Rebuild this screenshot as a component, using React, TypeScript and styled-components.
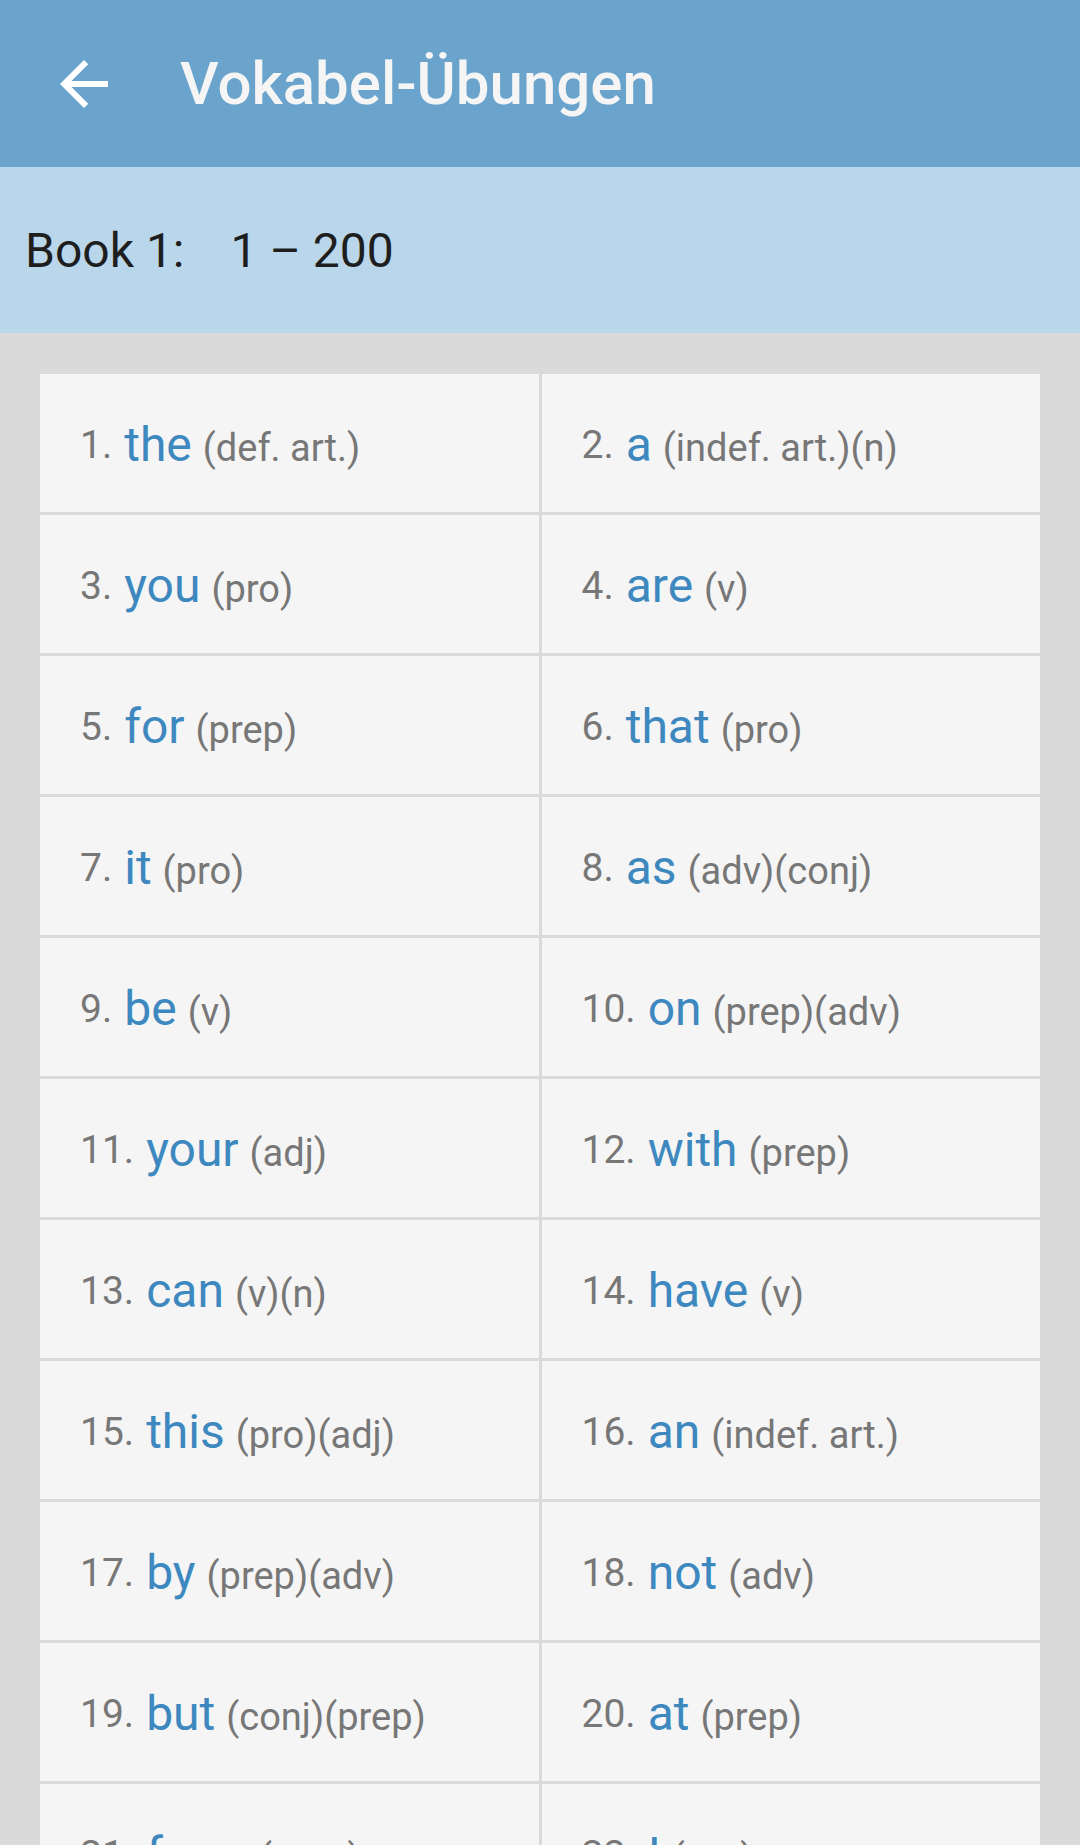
import React from 'react';
import styled, { createGlobalStyle } from 'styled-components';

interface Word {
  word: string
  pos: string
}

const words: Word[] = [
  { word: 'the', pos: '(def. art.)' },
  { word: 'a', pos: '(indef. art.)(n)' },
  { word: 'you', pos: '(pro)' },
  { word: 'are', pos: '(v)' },
  { word: 'for', pos: '(prep)' },
  { word: 'that', pos: '(pro)' },
  { word: 'it', pos: '(pro)' },
  { word: 'as', pos: '(adv)(conj)' },
  { word: 'be', pos: '(v)' },
  { word: 'on', pos: '(prep)(adv)' },
  { word: 'your', pos: '(adj)' },
  { word: 'with', pos: '(prep)' },
  { word: 'can', pos: '(v)(n)' },
  { word: 'have', pos: '(v)' },
  { word: 'this', pos: '(pro)(adj)' },
  { word: 'an', pos: '(indef. art.)' },
  { word: 'by', pos: '(prep)(adv)' },
  { word: 'not', pos: '(adv)' },
  { word: 'but', pos: '(conj)(prep)' },
  { word: 'at', pos: '(prep)' },
  { word: 'from', pos: '(prep)' },
  { word: 'I', pos: '(pro)' },
]

const GlobalStyle = createGlobalStyle`
  html, body {
    margin: 0;
    padding: 0;
    background: #dadada;
    font-family: Roboto, "Noto Sans", "Liberation Sans", sans-serif;
  }
`

const BackIcon = () => (
  <svg width="72" height="72" viewBox="0 0 24 24" fill="#ffffff">
    <path d="M20 11H7.83l5.59-5.59L12 4l-8 8 8 8 1.41-1.41L7.83 13H20v-2z" />
  </svg>
)

const App = () => {
  return (
    <Page>
      <GlobalStyle />
      <Toolbar>
        <NavButton aria-label="back">
          <BackIcon />
        </NavButton>
        <Title>Vokabel-Übungen</Title>
      </Toolbar>
      <SubHeader>
        <span>Book 1:</span>
        <span>1 – 200</span>
      </SubHeader>
      <WordGrid>
        {words.map((w, i) => (
          <WordCell key={w.word}>
            <Label>
              <Index>{i + 1}.</Index>
              <Term>{w.word}</Term>
              <Pos>{w.pos}</Pos>
            </Label>
          </WordCell>
        ))}
      </WordGrid>
    </Page>
  )
}

export default App;

const Page = styled.div`
  height: 1845px;
  overflow: hidden;
  background: #dadada;
`

const Toolbar = styled.header`
  display: flex;
  align-items: center;
  height: 167px;
  padding-left: 48px;
  background: #6aa3cb;
  box-sizing: border-box;
`

const NavButton = styled.div`
  display: flex;
  width: 72px;
  height: 72px;
  margin-right: 60px;
`

const Title = styled.h1`
  margin: 0;
  font-size: 60px;
  font-weight: 500;
  color: #f5f5f5;
  line-height: 1;
`

const SubHeader = styled.div`
  display: flex;
  align-items: center;
  gap: 46px;
  height: 166px;
  padding-left: 25px;
  background: #b9d6ea;
  font-size: 48px;
  color: #1e1e1e;
  box-sizing: border-box;
`

const WordGrid = styled.div`
  display: grid;
  grid-template-columns: 1fr 1fr;
  gap: 3px;
  padding: 41px 40px 0;
`

const WordCell = styled.div`
  display: flex;
  align-items: center;
  height: 138px;
  padding: 3px 0 0 40px;
  background: #f5f5f5;
  box-sizing: border-box;
`

const Label = styled.span`
  white-space: nowrap;
  line-height: 1;
`

const Index = styled.span`
  font-size: 39px;
  color: #777777;
  vertical-align: 3px;
`

const Term = styled.span`
  margin-left: 12px;
  font-size: 48px;
  color: #3e88c0;
`

const Pos = styled.span`
  margin-left: 11px;
  font-size: 38px;
  color: #777777;
`
